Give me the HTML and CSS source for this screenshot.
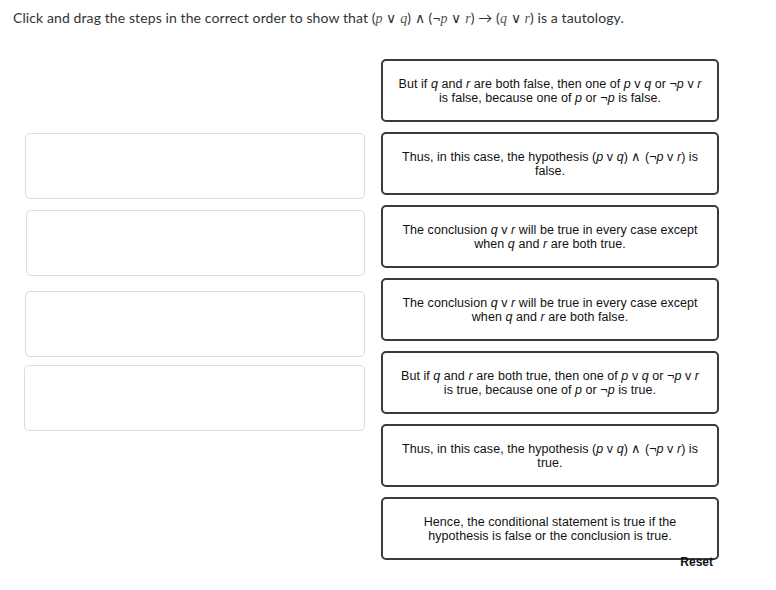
FILE: index.html
```html
<!DOCTYPE html>
<html lang="en">
  <head>
    <meta charset="UTF-8" />
    <title>Order the steps</title>
    <link rel="stylesheet" href="styles.css">
  </head>

  <body>
    <p class="prompt">
      Click and drag the steps in the correct order to show that
      (<i>p</i> ∨ <i>q</i>) ∧ (¬<i>p</i> ∨ <i>r</i>) → (<i>q</i> ∨ <i>r</i>) is a tautology.
    </p>

    <div class="board">
      <!-- Drop targets -->
      <div class="slots">
        <div class="slot slot-1"></div>
        <div class="slot slot-2"></div>
        <div class="slot slot-3"></div>
        <div class="slot slot-4"></div>
      </div>

      <!-- Draggable steps -->
      <div class="steps">
        <div class="step">
          <span>But if <i>q</i> and <i>r</i> are both false, then one of <i>p</i> v <i>q</i> or ¬<i>p</i> v <i>r</i><br>is false, because one of <i>p</i> or ¬<i>p</i> is false.</span>
        </div>
        <div class="step">
          <span>Thus, in this case, the hypothesis (<i>p</i> v <i>q</i>) ∧ (¬<i>p</i> v <i>r</i>) is<br>false.</span>
        </div>
        <div class="step">
          <span>The conclusion <i>q</i> v <i>r</i> will be true in every case except<br>when <i>q</i> and <i>r</i> are both true.</span>
        </div>
        <div class="step">
          <span>The conclusion <i>q</i> v <i>r</i> will be true in every case except<br>when <i>q</i> and <i>r</i> are both false.</span>
        </div>
        <div class="step">
          <span>But if <i>q</i> and <i>r</i> are both true, then one of <i>p</i> v <i>q</i> or ¬<i>p</i> v <i>r</i><br>is true, because one of <i>p</i> or ¬<i>p</i> is true.</span>
        </div>
        <div class="step">
          <span>Thus, in this case, the hypothesis (<i>p</i> v <i>q</i>) ∧ (¬<i>p</i> v <i>r</i>) is<br>true.</span>
        </div>
        <div class="step">
          <span>Hence, the conditional statement is true if the<br>hypothesis is false or the conclusion is true.</span>
        </div>
        <div class="reset-row">
          <a class="reset" href="#">Reset</a>
        </div>
      </div>
    </div>
  </body>
</html>
```

FILE: styles.css
```css
body {
  margin: 0;
  background-color: #fff;
  font-family: "Liberation Sans", Arial, sans-serif;
}

.prompt {
  margin: 0;
  padding: 8px 13px 0;
  height: 20px;
  font-family: Lato, "Open Sans", sans-serif;
  font-size: 14px;
  line-height: 20px;
  letter-spacing: 0.1px;
  color: #333;
}

.prompt i {
  font-family: "Liberation Serif", serif;
  line-height: 1;
  color: #555;
}

.board {
  display: flex;
  gap: 16px;
  padding: 31px 0 0 25px;
}

/* Empty answer boxes on the left */
.slots {
  display: flex;
  flex-direction: column;
  width: 340px;
}

.slot {
  height: 66px;
  box-sizing: border-box;
  border: 1px solid #dcdcdc;
  border-radius: 5px;
}

.slot-1 {
  margin-top: 74px;
}
.slot-2 {
  margin-top: 11px;
  margin-left: 1px;
}
.slot-3 {
  margin-top: 15px;
}
.slot-4 {
  margin-top: 8px;
  margin-left: -1px;
}

/* Step cards on the right */
.steps {
  display: flex;
  flex-direction: column;
  gap: 10px;
  width: 338px;
}

.step {
  display: flex;
  align-items: center;
  justify-content: center;
  box-sizing: border-box;
  height: 63px;
  padding: 0 6px;
  border: 2px solid #3a3a3a;
  border-radius: 5px;
  font-size: 12.5px;
  line-height: 14px;
  letter-spacing: 0.05px;
  text-align: center;
  color: #111;
}

.reset-row {
  margin-top: -16px;
  padding-right: 6px;
  text-align: right;
  line-height: 14px;
}

.reset {
  font-size: 12px;
  font-weight: bold;
  color: #111;
  text-decoration: none;
}
```
